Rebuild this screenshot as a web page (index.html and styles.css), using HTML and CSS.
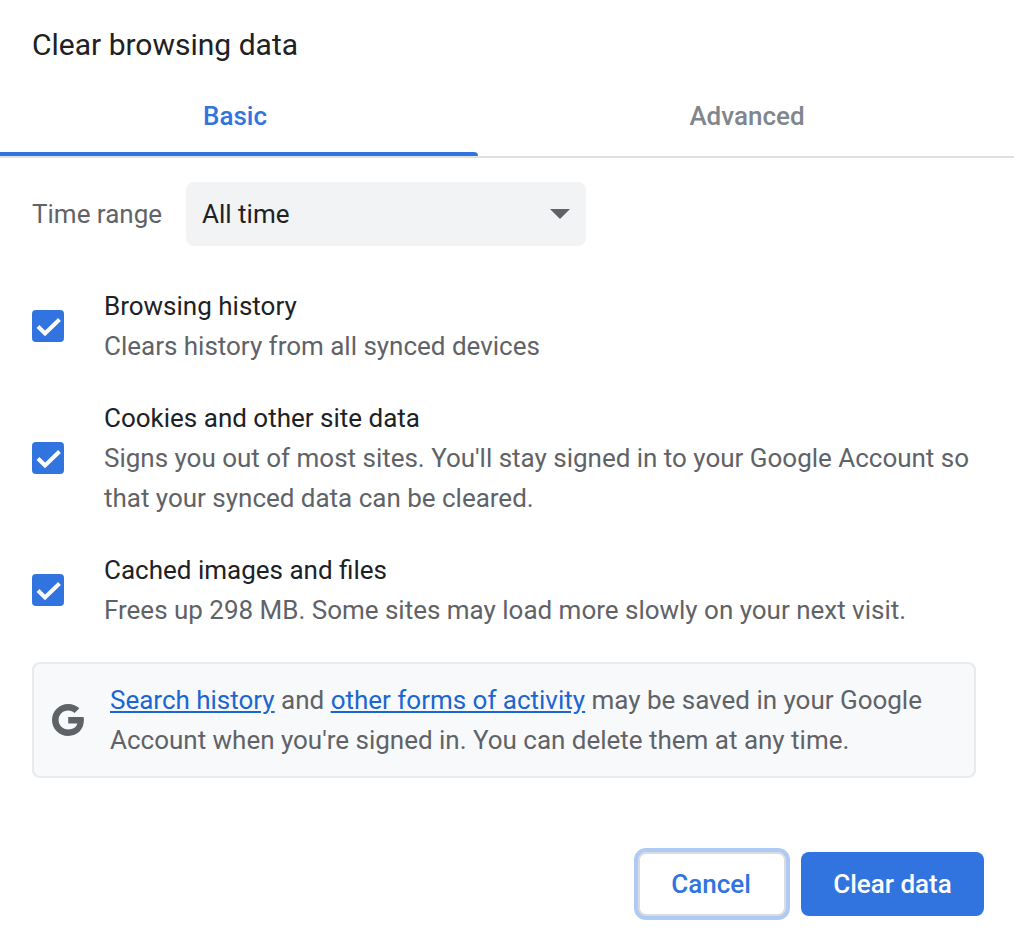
FILE: index.html
```html
<!DOCTYPE html>
<html lang="en">
<head>
<meta charset="utf-8">
<title>Clear browsing data</title>
<link rel="stylesheet" href="styles.css">
</head>
<body>
<div class="dialog">
  <h1 class="title">Clear browsing data</h1>
  <div class="tabs">
    <div class="tab tab-active">Basic</div>
    <div class="tab tab-other">Advanced</div>
  </div>
  <div class="range">
    <span class="range-label">Time range</span>
    <div class="select"><span>All time</span><span class="caret"></span></div>
  </div>
  <div class="options">
    <div class="option">
      <span class="check"><svg viewBox="0 0 32 32" width="32" height="32"><path d="M6 16.500 L13 23.500 L27.500 9.500" fill="none" stroke="#fff" stroke-width="4"/></svg></span>
      <div class="option-text">
        <div class="option-title">Browsing history</div>
        <div class="option-desc">Clears history from all synced devices</div>
      </div>
    </div>
    <div class="option">
      <span class="check"><svg viewBox="0 0 32 32" width="32" height="32"><path d="M6 16.500 L13 23.500 L27.500 9.500" fill="none" stroke="#fff" stroke-width="4"/></svg></span>
      <div class="option-text">
        <div class="option-title">Cookies and other site data</div>
        <div class="option-desc">Signs you out of most sites. You'll stay signed in to your Google Account so that your synced data can be cleared.</div>
      </div>
    </div>
    <div class="option">
      <span class="check"><svg viewBox="0 0 32 32" width="32" height="32"><path d="M6 16.500 L13 23.500 L27.500 9.500" fill="none" stroke="#fff" stroke-width="4"/></svg></span>
      <div class="option-text">
        <div class="option-title">Cached images and files</div>
        <div class="option-desc">Frees up 298 MB. Some sites may load more slowly on your next visit.</div>
      </div>
    </div>
  </div>
  <div class="notice">
    <svg class="g-icon" viewBox="1.300 1.500 29 29" width="32" height="32"><path d="M16 13.200v5.900h8.300c-.9 3.400-3.900 5.400-8.300 5.400-5 0-8.700-3.800-8.700-8.500S11 7.500 16 7.500c2.400 0 4.300.8 5.800 2.200l4.300-4.300C23.500 3 20.100 1.500 16 1.500 7.800 1.500 1.300 8 1.300 16S7.800 30.500 16 30.500c8.500 0 14.200-6 14.200-14.400 0-1-.1-2-.3-2.900H16z" fill="#5f6368"/></svg>
    <p class="notice-text"><a href="#">Search history</a> and <a href="#">other forms of activity</a> may be saved in your Google Account when you're signed in. You can delete them at any time.</p>
  </div>
  <div class="actions">
    <button class="btn btn-cancel">Cancel</button>
    <button class="btn btn-primary">Clear data</button>
  </div>
</div>
</body>
</html>
```

FILE: styles.css
```css
* { box-sizing: border-box; }
html, body { margin: 0; padding: 0; background: #fff; }
body {
  font-family: Roboto, "Liberation Sans", sans-serif;
  color: #202124;
  width: 1014px;
  height: 946px;
  overflow: hidden;
}
.dialog { display: flex; flex-direction: column; }
.title {
  margin: 0;
  padding: 25px 32px 0;
  height: 80px;
  font-size: 30px;
  line-height: 40px;
  font-weight: 400;
}
.tabs {
  display: flex;
  height: 78px;
  border-bottom: 2px solid #e0e0e0;
}
.tab {
  flex: 0 0 536px;
  padding-top: 16px;
  line-height: 40px;
  font-size: 26px;
  font-weight: 500;
  color: #80868b;
  text-align: center;
}
.tab-other { padding-left: 2px; }
.tab-active {
  flex-basis: 478px;
  padding-right: 8px;
  height: 76px;
  color: #3174e0;
  position: relative;
}
.tab-active::after {
  content: "";
  position: absolute;
  left: 0;
  right: 0;
  bottom: 0;
  height: 4px;
  background: #3174e0;
  border-top-right-radius: 4px;
}
.range {
  display: flex;
  align-items: center;
  padding: 24px 32px 0;
}
.range-label {
  width: 154px;
  font-size: 26px;
  color: #5f6368;
}
.select {
  width: 400px;
  height: 64px;
  padding: 0 16px;
  background: #f1f3f4;
  border-radius: 8px;
  display: flex;
  align-items: center;
  justify-content: space-between;
  font-size: 26px;
}
.caret {
  width: 0;
  height: 0;
  border-left: 10px solid transparent;
  border-right: 10px solid transparent;
  border-top: 10px solid #5f6368;
}
.options { display: flex; flex-direction: column; gap: 32px; padding: 40px 32px 0; }
.option { display: flex; align-items: center; }
.check {
  flex: none;
  width: 32px;
  height: 32px;
  margin-right: 40px;
  border-radius: 4px;
  background: #3174e0;
  display: block;
}
.check svg { display: block; }
.option-text { flex: 1; min-width: 0; font-size: 26px; line-height: 40px; }
.option-desc { color: #5f6368; letter-spacing: -0.012px; }
.notice {
  margin: 32px 38px 0 32px;
  height: 116px;
  display: flex;
  align-items: center;
  padding: 0 20px 0 18px;
  background: #f8f9fa;
  border: 2px solid #e8eaed;
  border-radius: 8px;
}
.g-icon { flex: none; margin-right: 26px; }
.notice-text { margin: 0; font-size: 26px; line-height: 40px; color: #5f6368; letter-spacing: -0.012px; }
.notice-text a { color: #1a66d2; text-decoration: underline; }
.actions {
  display: flex;
  justify-content: flex-end;
  gap: 15px;
  padding: 74px 30px 0 0;
}
.btn {
  height: 64px;
  border-radius: 8px;
  font-family: inherit;
  font-size: 26px;
  font-weight: 500;
  padding: 0;
}
.btn-cancel {
  width: 148px;
  padding-right: 2px;
  background: #fff;
  color: #3174e0;
  border: 2px solid #dadce0;
  box-shadow: 0 0 0 4px #aecbf5;
}
.btn-primary {
  width: 183px;
  background: #3174e0;
  color: #fff;
  border: 0;
}
```
